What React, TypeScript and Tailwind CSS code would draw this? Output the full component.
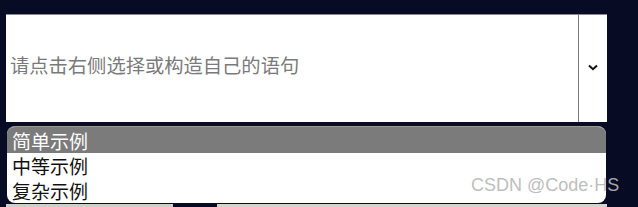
import React from "react";

export default function App() {
  const font = { fontFamily: '"Noto Sans CJK SC", "Noto Sans", sans-serif' };
  return (
    <div className="relative w-[638px] h-[207px] overflow-hidden bg-[#070b24]" style={font}>
      <div className="flex flex-col pl-[6px] pt-[14px]">
        <div className="flex h-[108px] w-[601px]">
          <div className="flex flex-1 items-center bg-white border-t border-[#8a8a8a] pl-[4px] pb-[5px]">
            <span className="text-[19.3px] leading-none text-[#7a7a7a]">请点击右侧选择或构造自己的语句</span>
          </div>
          <div className="flex w-[29px] items-center justify-center bg-white border-t border-l border-t-[#8a8a8a] border-l-[#7a7a7a]">
            <svg width="10" height="7" viewBox="0 0 10 7" className="mb-[3px]">
              <path d="M1 1.5 L5 5.2 L9 1.5" fill="none" stroke="#111" strokeWidth="2" />
            </svg>
          </div>
        </div>
        <div className="mt-[4px] ml-[1px] flex h-[77px] w-[599px] flex-col overflow-hidden rounded-[8px] bg-white border-t border-[#999] text-[19px]">
          <div className="flex h-[26px] items-center bg-[#7b7b7b] pl-[5px] text-white leading-none">简单示例</div>
          <div className="flex h-[25px] items-center pl-[5px] text-[#111] leading-none">中等示例</div>
          <div className="flex h-[25px] items-center pl-[5px] text-[#111] leading-none">复杂示例</div>
        </div>
        <div className="mt-[1px] flex h-[3px] w-[601px]">
          <div className="w-[167px] bg-[#cfcfcf]" />
          <div className="w-[44px] bg-[#070b24]" />
          <div className="flex-1 bg-[#d4d4d4]" />
        </div>
      </div>
      <div className="absolute left-[471px] top-[176px] text-[18px] leading-none text-[#b8b8b8] opacity-90" style={{ fontFamily: '"Liberation Sans", "Noto Sans CJK SC", sans-serif' }}>
        CSDN @Code·HS
      </div>
    </div>
  );
}
